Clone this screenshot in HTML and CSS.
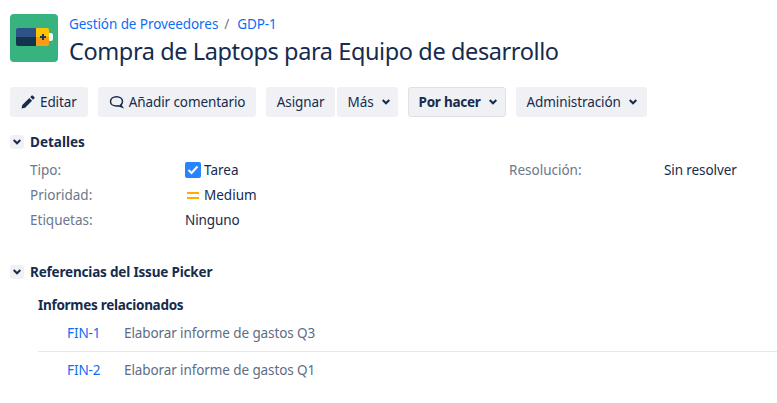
FILE: index.html
```html
<!DOCTYPE html>
<html lang="es">
<head>
    <meta charset="UTF-8">
    <title>GDP-1</title>
    <link rel="stylesheet" href="styles.css">
</head>
<body>
    <header class="issue-header">
        <svg class="project-logo" width="48" height="48" viewBox="0 0 48 48">
            <rect width="48" height="48" rx="4" fill="#36b37e"/>
            <path d="M39 19h2a2 2 0 0 1 2 2v4a2 2 0 0 1-2 2h-2z" fill="#f4f5f7"/>
            <path d="M8 14h18v9H6v-7a2 2 0 0 1 2-2z" fill="#2f5288"/>
            <path d="M6 23h20v9H8a2 2 0 0 1-2-2z" fill="#13344a"/>
            <path d="M26 14h11a2 2 0 0 1 2 2v7H26z" fill="#ffc400"/>
            <path d="M26 23h13v7a2 2 0 0 1-2 2H26z" fill="#f99d17"/>
            <path d="M32 20h2v2h2v2h-2v2h-2v-2h-2v-2h2z" fill="#253858"/>
        </svg>
        <div class="issue-heading">
            <nav class="breadcrumbs"><a href="#">Gestión de Proveedores</a><span class="sep">/</span><a href="#">GDP-1</a></nav>
            <h1>Compra de Laptops para Equipo de desarrollo</h1>
        </div>
    </header>

    <div class="toolbar">
        <button class="btn">
            <svg width="14" height="14" viewBox="0 0 14 14"><path d="M0.500 13.500l0.800-3.600 7-7 2.800 2.800-7 7zM9.200 2l1.300-1.300a1 1 0 0 1 1.400 0l1.400 1.400a1 1 0 0 1 0 1.400L12 4.800z" fill="#172b4d"/></svg>
            Editar
        </button>
        <button class="btn">
            <svg width="15" height="14" viewBox="0 0 15 14"><path d="M7.500 1.800c3.500 0 6 2.100 6 4.700 0 1.400-.7 2.500-1.700 3.300l1.400 2.200-3.400-1.200c-.7.2-1.500.3-2.300.3-3.500 0-6-2-6-4.600s2.500-4.700 6-4.700z" fill="none" stroke="#172b4d" stroke-width="1.500"/></svg>
            Añadir comentario
        </button>
        <div class="btn-group">
            <button class="btn">Asignar</button>
            <button class="btn btn-menu">Más <svg class="caret" width="8" height="6" viewBox="0 0 8 6"><path d="M.7 1l3.300 3.300L7.300 1" fill="none" stroke="#172b4d" stroke-width="2"/></svg></button>
        </div>
        <button class="btn btn-menu btn-status">Por hacer <svg class="caret" width="8" height="6" viewBox="0 0 8 6"><path d="M.7 1l3.300 3.300L7.300 1" fill="none" stroke="#172b4d" stroke-width="2"/></svg></button>
        <button class="btn btn-menu">Administración <svg class="caret" width="8" height="6" viewBox="0 0 8 6"><path d="M.7 1l3.300 3.300L7.300 1" fill="none" stroke="#172b4d" stroke-width="2"/></svg></button>
    </div>

    <section class="module details">
        <h2 class="module-title">
            <span class="toggle"><svg width="8" height="6" viewBox="0 0 8 6"><path d="M.7 1l3.300 3.300L7.300 1" fill="none" stroke="#172b4d" stroke-width="2"/></svg></span>
            Detalles
        </h2>
        <div class="detail-grid">
            <span class="label">Tipo:</span>
            <span class="value">
                <svg width="16" height="16" viewBox="0 0 16 16"><rect width="16" height="16" rx="2" fill="#2684ff"/><path d="M3.500 8l3 3 6-6.500" fill="none" stroke="#fff" stroke-width="2"/></svg>
                Tarea
            </span>
            <span class="label">Resolución:</span>
            <span class="plain">Sin resolver</span>
            <span class="label">Prioridad:</span>
            <span class="value">
                <svg width="16" height="16" viewBox="0 0 16 16"><path d="M2 5h12v2H2zM2 10h12v2H2z" fill="#ffab00"/></svg>
                Medium
            </span>
            <span></span><span></span>
            <span class="label">Etiquetas:</span>
            <span class="plain">Ninguno</span>
        </div>
    </section>

    <section class="module refs">
        <h2 class="module-title">
            <span class="toggle"><svg width="8" height="6" viewBox="0 0 8 6"><path d="M.7 1l3.300 3.300L7.300 1" fill="none" stroke="#172b4d" stroke-width="2"/></svg></span>
            <span class="tight">Referencias del Issue Picker</span>
        </h2>
        <h3 class="refs-title">Informes relacionados</h3>
        <ul class="ref-list">
            <li><a href="#">FIN-1</a><span>Elaborar informe de gastos Q3</span></li>
            <li><a href="#">FIN-2</a><span>Elaborar informe de gastos Q1</span></li>
        </ul>
    </section>
</body>
</html>
```

FILE: styles.css
```css
/* Estilos principales */
body {
    font-family: "Noto Sans", sans-serif;
    font-size: 14px;
    color: #172b4d;
    background: #fff;
    margin: 0;
    padding: 14px 0 0 10px;
    overflow: hidden;
}
a {
    color: #0f6cf5;
    text-decoration: none;
}
.issue-header {
    display: flex;
    gap: 11px;
    height: 48px;
}
.project-logo {
    flex: none;
}
.breadcrumbs {
    font-size: 13.500px;
    line-height: 20px;
    color: #6b778c;
    letter-spacing: -0.08px;
}
.sep {
    margin: 0 8px 0 6px;
}
h1 {
    font-size: 23.500px;
    font-weight: 400;
    line-height: 32px;
    margin: 1px 0 0;
    white-space: nowrap;
    letter-spacing: -0.4px;
}
.toolbar {
    display: flex;
    gap: 10px;
    margin-top: 25px;
}
.btn {
    display: flex;
    align-items: center;
    gap: 5px;
    height: 30px;
    padding: 0 11px;
    border: none;
    border-radius: 3px;
    background: #f0f1f4;
    color: #172b4d;
    font-family: inherit;
    font-size: 13.500px;
    letter-spacing: -0.1px;
    white-space: nowrap;
}
.btn-group {
    display: flex;
    gap: 2px;
}
.btn-group .btn {
    padding: 0 10.500px;
}
.btn-menu {
    padding-right: 10px;
}
.btn-group .btn-menu {
    padding-right: 8px;
}
.caret {
    margin-left: 3px;
}
.btn-status {
    font-weight: 700;
    border: 1px solid #dfe1e6;
    padding: 0 8px 0 10px;
    letter-spacing: -0.25px;
}
.module-title {
    display: flex;
    align-items: center;
    gap: 6px;
    font-size: 13.500px;
    font-weight: 700;
    line-height: 20px;
    margin: 0;
}
.tight {
    letter-spacing: -0.18px;
}
.toggle {
    display: flex;
    align-items: center;
    justify-content: center;
    width: 14px;
    height: 14px;
    border-radius: 3px;
    background: #f0f1f4;
}
.details {
    margin-top: 15px;
}
.detail-grid {
    display: grid;
    grid-template-columns: 155px 324px 155px 1fr;
    grid-auto-rows: 25px;
    align-items: center;
    margin: 5px 0 0 20px;
}
.label {
    color: #6b778c;
}
.label, .value, .plain {
    font-size: 13.500px;
    white-space: nowrap;
}
.plain {
    letter-spacing: -0.1px;
}
.value {
    display: flex;
    align-items: center;
    gap: 3px;
}
.refs {
    margin-top: 30px;
}
.refs-title {
    font-size: 13.500px;
    font-weight: 700;
    line-height: 20px;
    margin: 13px 0 0 28px;
    letter-spacing: -0.28px;
}
.ref-list {
    list-style: none;
    margin: 0 0 0 28px;
    padding: 0;
}
.ref-list li {
    display: flex;
    height: 36px;
    align-items: center;
    padding-left: 29px;
    font-size: 13.500px;
    letter-spacing: -0.1px;
}
.ref-list li + li {
    border-top: 1px solid #e6e8ec;
}
.ref-list a {
    width: 57px;
}
.ref-list span {
    color: #5e6c84;
}
```
